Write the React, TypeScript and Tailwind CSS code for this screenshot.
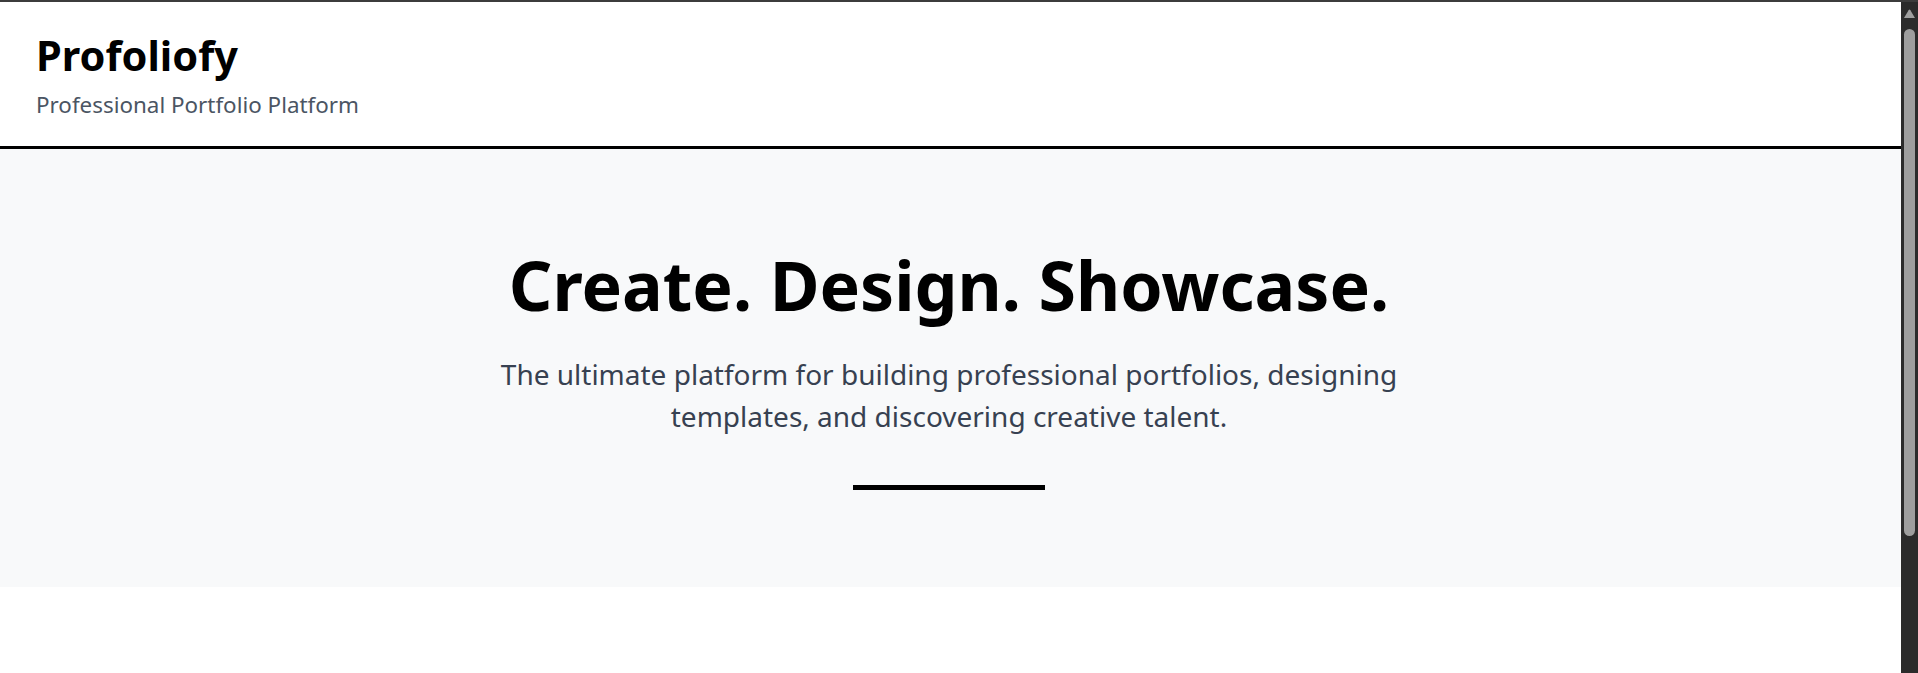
import React from "react";

export default function App() {
  return (
    <div
      className="h-[673px] overflow-hidden border-t-2 border-[#3c3c3c] flex bg-white"
      style={{ fontFamily: '"Noto Sans", "Open Sans", sans-serif' }}
    >
      <div className="flex-1 min-w-0 flex flex-col">
        <header className="bg-white border-b-[3px] border-black pl-[36px] pt-[27px] pb-[26px]">
          <h1 className="text-[41.5px] font-bold leading-[52px] text-black">Profoliofy</h1>
          <p className="mt-[9px] text-[22.4px] leading-[30px] text-[#4b5563]">
            Professional Portfolio Platform
          </p>
        </header>
        <section className="bg-[#f8f9fa] pt-[102px] pb-[97px] pr-[3px] flex flex-col items-center text-center">
          <h2 className="text-[68px] font-bold leading-[68px] text-black">
            Create. Design. Showcase.
          </h2>
          <p className="mt-[35px] text-[28px] leading-[41.6px] text-[#374151]">
            The ultimate platform for building professional portfolios, designing
            <br />
            templates, and discovering creative talent.
          </p>
          <div className="mt-[48px] w-[192px] h-[5px] bg-black" />
        </section>
        <div className="flex-1 bg-white" />
      </div>
      <div className="w-[17px] shrink-0 bg-[#2b2b2b] flex flex-col items-center">
        <svg className="mt-[7px]" width="11" height="9" viewBox="0 0 11 9">
          <path d="M4.6 1.2 Q5.5 0 6.4 1.2 L11 9 L0 9 Z" fill="#9e9e9e" />
        </svg>
        <div className="mt-[11px] w-[11px] h-[507px] rounded-full bg-[#9e9e9e]" />
      </div>
    </div>
  );
}
